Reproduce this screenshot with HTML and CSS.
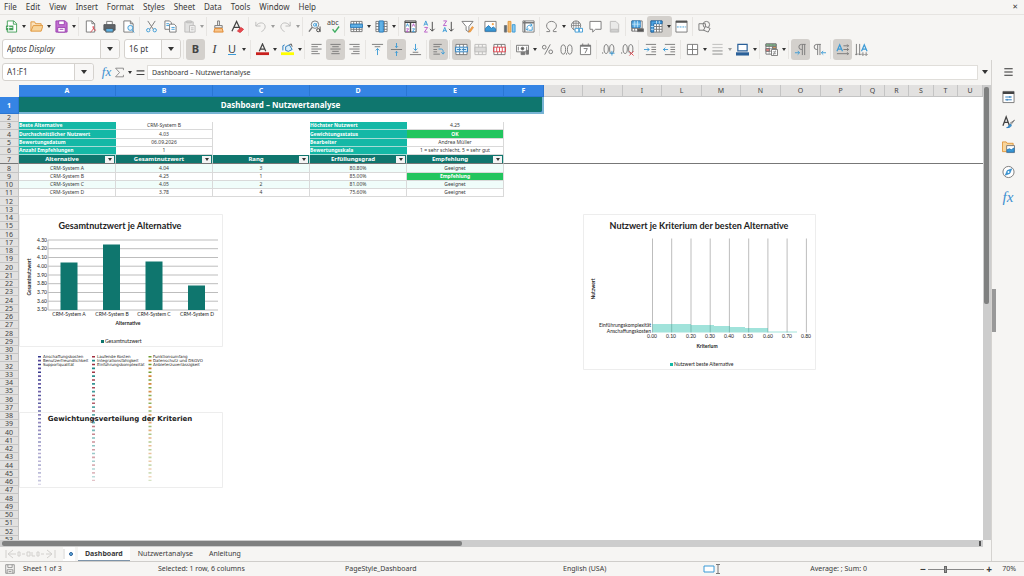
FILE: index.html
```html
<!DOCTYPE html>
<html lang="de">
<head>
<meta charset="utf-8">
<title>Dashboard – Nutzwertanalyse</title>
<link rel="stylesheet" href="styles.css">
</head>
<body>
<nav class="menubar">
  <button>File</button><button>Edit</button><button>View</button><button>Insert</button><button>Format</button><button>Styles</button><button>Sheet</button><button>Data</button><button>Tools</button><button>Window</button><button>Help</button>
  <button class="close" aria-label="Close">✕</button>
</nav>

<div class="toolbar">
  <button class="split" aria-label="New"><svg viewBox="0 0 14 14"><path d="M2.500 1h7l3 3v9h-10z" fill="#fff" stroke="#44a05a"/><path d="M1 6h8v5H1z" fill="#44a05a" stroke="none"/><path d="M2 8h6M4 6v5" stroke="#fff"/><path d="M9 1v3.500h3.500" stroke="#44a05a"/></svg></button>
  <button class="split" aria-label="Open"><svg viewBox="0 0 14 14"><path d="M1 12V2h4l1 2h6v3" fill="#fbe3bd" stroke="#e0963c"/><path d="M1 12l2.500-6H14l-2 6z" fill="#f8d59c" stroke="#e0963c"/></svg></button>
  <button class="split" aria-label="Save"><svg viewBox="0 0 14 14"><path d="M1 1h10l2 2v10H1z" fill="#c16fd0" stroke="#9c3fb0"/><path d="M4 1h6v4H4zM3 8h8v5H3z" fill="#fff" stroke="#9c3fb0"/><path d="M5 10h4" stroke="#9c3fb0"/></svg></button>
  <i class="sep"></i>
  <button aria-label="Export as PDF"><svg viewBox="0 0 14 14"><path d="M2.500 1h6l3 3v9h-9z" fill="#fff"/><path d="M8.500 1v3h3"/><path d="M7 13c3-2 4-5 3-6s0 4 3 4" stroke="#e0454f"/></svg></button>
  <button aria-label="Print"><svg viewBox="0 0 14 14"><path d="M4 5V1.500h6V5" fill="#fff"/><path d="M1 5h12v6H1z" fill="#606468" stroke="#505458"/><path d="M3 9h8v4H3z" fill="#5eb2e4" stroke="#505458"/></svg></button>
  <button aria-label="Print Preview"><svg viewBox="0 0 14 14"><path d="M2 1h7l3 3v9H2z" fill="#fff"/><path d="M9 1v3h3"/><circle cx="9" cy="8.500" r="2.700" fill="#e5f3fb" stroke="#3b9ad6"/><path d="M11 10.500l2 3" stroke="#3b9ad6"/></svg></button>
  <i class="sep"></i>
  <button aria-label="Cut"><svg viewBox="0 0 14 14"><path d="M3 1l6 9M11 1L5 10"/><circle cx="3.500" cy="11" r="1.800" stroke="#3b9ad6"/><circle cx="10.500" cy="11" r="1.800" stroke="#3b9ad6"/></svg></button>
  <button aria-label="Copy"><svg viewBox="0 0 14 14"><path d="M1 1h5l2 2v7H1z" fill="#fff"/><path d="M6 4.500h5l2 2V13H6z" fill="#fff"/><path d="M8 8h3.500M8 10h3.500" stroke="#3b9ad6"/><path d="M2.500 4h3M2.500 6h3" stroke="#3b9ad6"/></svg></button>
  <button class="split off" aria-label="Paste"><svg viewBox="0 0 14 14"><path d="M2 2h9v11H2z" fill="#ccc"/><path d="M4 1h5v2H4z"/><path d="M7 6h6v7H7z" fill="#f4f4f4"/><path d="M8.500 8.500h3M8.500 10.500h3"/></svg></button>
  <i class="sep"></i>
  <button aria-label="Clone Formatting"><svg viewBox="0 0 14 14"><path d="M6 1h2v5H6z"/><path d="M3 6h8v2.500H3z" fill="#f6f5f4"/><path d="M3 9h8l1 4H2z" fill="#f8c48a" stroke="#e0862c"/></svg></button>
  <button aria-label="Clear Formatting"><svg viewBox="0 0 14 14"><path d="M1 12L6 1.500 10 10M3 8h5.500" stroke="#444" stroke-width="1.300"/><path d="M7 12l3.500-4 3 2-3.500 3.500z" fill="#e8484e" stroke="#d63a42"/></svg></button>
  <i class="sep"></i>
  <button class="split off" aria-label="Undo"><svg viewBox="0 0 14 14"><path d="M2 2v4.500h5M2 6.500C5 2 11 2 12 6.500c.5 3-2 5-4 6"/></svg></button>
  <button class="split off" aria-label="Redo"><svg viewBox="0 0 14 14"><path d="M12 2v4.500H7M12 6.500C9 2 3 2 2 6.500c-.5 3 2 5 4 6"/></svg></button>
  <i class="sep"></i>
  <button aria-label="Find and Replace"><svg viewBox="0 0 14 14"><circle cx="7.500" cy="5" r="4" fill="#f3f9fd"/><path d="M4.500 8L1 12.500" stroke-width="1.500"/><circle cx="7.300" cy="5.200" r="1.400" stroke="#3b9ad6"/><path d="M9 3.500V7" stroke="#3b9ad6"/><circle cx="11" cy="11" r="1.700" stroke="#444"/><path d="M13 7v6" stroke="#444"/></svg></button>
  <button aria-label="Spelling" class="spell"><span>abc</span><svg viewBox="0 0 14 14"><path d="M6 10l2.500 3L13 7" stroke="#3fae62" stroke-width="1.500"/></svg></button>
  <i class="sep"></i>
  <button class="split" aria-label="Row"><svg viewBox="0 0 14 14"><path d="M1 1.500h12v11H1z" fill="#fff"/><path d="M1 4.500h12M1 10h12M4 1.500v11M7 1.500v11M10 1.500v11"/><path d="M.5 4.500h13V8H.5z" fill="#5fb1e6" stroke="#2c7cbc"/></svg></button>
  <button class="split" aria-label="Column"><svg viewBox="0 0 14 14"><path d="M1 1.500h12v11H1z" fill="#fff"/><path d="M1 4h12M1 7h12M1 10h12M4 1.500v11M10 1.500v11"/><path d="M4.500 1H9v12H4.500z" fill="#5fb1e6" stroke="#2c7cbc"/></svg></button>
  <i class="sep"></i>
  <button aria-label="Sort"><svg viewBox="0 0 14 14"><path d="M1 1h12v12H1z" fill="#fff" stroke="#444"/><path d="M1 2.500h12M7 2v11" stroke="#444" stroke-width="1.500"/><path d="M2.500 7l1.200-3L5 7M9 9.500h2.500L9 12.500h2.500" stroke="#3b9ad6"/><path d="M2.500 9.500H5l-2.500 3H5M9 7l1.200-3 1.300 3" stroke="#b85ac8"/></svg></button>
  <button aria-label="Sort Ascending"><svg viewBox="0 0 14 14"><path d="M1 6l2-5 2 5M2 4.500h2.500" stroke="#3b9ad6"/><path d="M1.500 8H5l-3.500 5H5" stroke="#b85ac8"/><path d="M10 2v10M7.500 9.500L10 12l2.500-2.500" stroke="#444"/></svg></button>
  <button aria-label="Sort Descending"><svg viewBox="0 0 14 14"><path d="M1.500 1H5L1.500 6H5" stroke="#b85ac8"/><path d="M1 13l2-5 2 5M2 11.500h2.500" stroke="#3b9ad6"/><path d="M10 2v10M7.500 9.500L10 12l2.500-2.500" stroke="#444"/></svg></button>
  <button aria-label="AutoFilter"><svg viewBox="0 0 14 14"><path d="M1 1.500h12L8.500 7v6L5.500 11V7z" fill="#fff"/><path d="M8 13l4-6 1.500 1L10 13z" fill="#f3a34c" stroke="#e0862c" stroke-width=".6"/></svg></button>
  <i class="sep"></i>
  <button aria-label="Insert Image"><svg viewBox="0 0 14 14"><path d="M1 1.500h12v11H1z" fill="#fff"/><path d="M1.500 12V9L5 6l3 3 2-1.500 2.500 2V12z" fill="#3b9ad6" stroke="#2c7cbc"/><circle cx="9.500" cy="4.500" r="1.200" fill="#f3a34c" stroke="none"/></svg></button>
  <button aria-label="Insert Chart"><svg viewBox="0 0 14 14"><path d="M1.500 6H4v7H1.500z" fill="#5b6b78"/><path d="M5.500 1.500h3V13h-3z" fill="#f6bd6e" stroke="#e0963c"/><path d="M10 5h3v8h-3z" fill="#8ccbf0" stroke="#3b9ad6"/></svg></button>
  <button aria-label="Pivot Table"><svg viewBox="0 0 14 14"><path d="M1 1h12v12H1z" fill="#fff"/><path d="M1 3h12M3 1v12" stroke-width="1.500"/><path d="M5.500 11V8c0-2 2-2.500 5-2.500M9 4l2 1.500L9 7M4 9.500L5.500 11 7 9.500M11 7v4H7" stroke="#3b9ad6"/></svg></button>
  <i class="sep"></i>
  <button class="split" aria-label="Special Character"><svg viewBox="0 0 14 14"><path d="M1.500 12.500H5V11C-.5 8 1.500 1.500 7 1.500S14.500 8 9 11v1.500h3.500"/></svg></button>
  <button aria-label="Hyperlink"><svg viewBox="0 0 14 14"><circle cx="6.500" cy="6" r="5" fill="#fff"/><path d="M1.500 6h10M6.500 1v10M2.500 3.500h8M4 1.500v9M9 1.500v9" stroke-width=".8"/><path d="M5.500 9h4v4h-4zM10 9h3.500v4H10z" fill="#fff" stroke="#3b9ad6"/></svg></button>
  <button aria-label="Comment"><svg viewBox="0 0 14 14"><path d="M1 1.500h12V10H7l-3 3v-3H1z" fill="#fff"/></svg></button>
  <button class="off" aria-label="Headers and Footers"><svg viewBox="0 0 14 14"><path d="M2.500 1.500h6l3 3V13h-9z" fill="#ddd"/><path d="M3 10h8v2H3z" fill="#bbb"/></svg></button>
  <i class="sep"></i>
  <button aria-label="Print Area"><svg viewBox="0 0 14 14"><path d="M1 1h11v11H1z" fill="#fff"/><path d="M1 9h11M4 8v4M7 8v4M9 1v11M1 1v11"/><path d="M1 1h9v7H1z" fill="#5fb1e6" stroke="#2c7cbc"/><path d="M1 4.500h9M4 1v7M7 1v7" stroke="#d8eefb" stroke-width=".7"/><path d="M7 9.500h6.500v3H7z" fill="#555"/></svg></button>
  <button class="split on" aria-label="Freeze Rows and Columns"><svg viewBox="0 0 14 14"><path d="M1 1h12v12H1z" fill="#fff"/><path d="M4 7h9M4 10h9M7 4v9M10 4v9"/><path d="M1 1h12v3H4v9H1z" fill="#4ba0de" stroke="#1c66a6"/><path d="M7 1v3M10 1v3M1 7h3M1 10h3" stroke="#bfe0f6"/></svg></button>
  <button aria-label="Split Window"><svg viewBox="0 0 14 14"><path d="M1 1h12v12H1z" fill="#fff"/><path d="M1 2h12" stroke-width="2" stroke="#555"/><path d="M2 7.500h10" stroke="#3b9ad6" stroke-dasharray="2 1"/></svg></button>
  <i class="sep"></i>
  <button aria-label="Shapes"><svg viewBox="0 0 14 14"><path d="M1 4h7v7H1z"/><circle cx="9" cy="5" r="3.500"/><path d="M8 7l5 2-2 4-5-2z" fill="#f6f5f4"/></svg></button>
</div>

<div class="toolbar format">
  <div class="combo font"><input class="italic" aria-label="Font Name" value="Aptos Display"><button aria-label="Font list"></button></div>
  <div class="combo size"><input aria-label="Font Size" value="16 pt"><button aria-label="Size list"></button></div>
  <i class="sep"></i>
  <button class="on glyph bold" aria-label="Bold">B</button>
  <button class="glyph slant" aria-label="Italic">I</button>
  <button class="split glyph under" aria-label="Underline">U</button>
  <i class="sep"></i>
  <button class="split" aria-label="Font Color"><svg viewBox="0 0 14 14"><path d="M3.500 9L7 1l3.500 8M4.500 6.500h5" stroke="#444" stroke-width="1.300"/><path d="M0 10h14v3H0z" fill="#c9211e" stroke="none"/></svg></button>
  <button class="split" aria-label="Highlighting"><svg viewBox="0 0 14 14"><path d="M2 8V3l2-1M5 4l4-2 3 5-4 2-3-1z" fill="#d9eefa" stroke="#2c7cbc"/><path d="M9 2l2-1 1 3" stroke="#555"/><path d="M0 10h14v3H0z" fill="#ffff00" stroke="none"/></svg></button>
  <i class="sep"></i>
  <button aria-label="Align Left"><svg viewBox="0 0 14 14"><path d="M1.500 1.500h11M1.500 4h7M1.500 6.500h11M1.500 9h7M1.500 11.500h9"/></svg></button>
  <button class="on" aria-label="Center"><svg viewBox="0 0 14 14"><path d="M1.500 1.500h11M3.500 4h7M1.500 6.500h11M3.500 9h7M2.500 11.500h9"/></svg></button>
  <button aria-label="Align Right"><svg viewBox="0 0 14 14"><path d="M1.500 1.500h11M5.500 4h7M1.500 6.500h11M5.500 9h7M3.500 11.500h9"/></svg></button>
  <i class="sep"></i>
  <button aria-label="Align Top"><svg viewBox="0 0 14 14"><path d="M1 1.500h12M4 4h6"/><path d="M7 13V6M5 8l2-2 2 2" stroke="#3b9ad6"/></svg></button>
  <button class="on" aria-label="Center Vertically"><svg viewBox="0 0 14 14"><path d="M1 7h12"/><path d="M7 0v5M5.500 3.500L7 5l1.500-1.500M7 14V9M5.500 10.500L7 9l1.500 1.500" stroke="#3b9ad6"/></svg></button>
  <button aria-label="Align Bottom"><svg viewBox="0 0 14 14"><path d="M1 12.500h12M4 10h6"/><path d="M7 1v7M5 6l2 2 2-2" stroke="#3b9ad6"/></svg></button>
  <i class="sep"></i>
  <button class="on" aria-label="Wrap Text"><svg viewBox="0 0 14 14"><path d="M1.500 1.500h9M1.500 4h7M1.500 7h4M1.500 9.500h4M1.500 12h7"/><path d="M7 6.500h3c2 0 2 1.500 2 5M10 10l2 2 1.500-2" stroke="#3b9ad6"/></svg></button>
  <i class="sep"></i>
  <button class="on" aria-label="Merge and Center"><svg viewBox="0 0 14 14"><path d="M1 1.500h12v11H1z" fill="#fff"/><path d="M5 1.500v11M9 1.500v11"/><path d="M.5 4.500h13v5H.5z" fill="#d9eefa" stroke="#2c7cbc"/><path d="M2 7h4M12 7H8M4.500 5.500L6 7 4.500 8.500M9.500 5.500L8 7l1.500 1.500" stroke="#2c7cbc"/></svg></button>
  <button class="off" aria-label="Merge Cells"><svg viewBox="0 0 14 14"><path d="M1 1.500h12v11H1zM5 1.500v11M9 1.500v11"/><path d="M1 4.500h12v5H1z" fill="#bbb"/></svg></button>
  <button aria-label="Unmerge Cells"><svg viewBox="0 0 14 14"><path d="M1 1.500h12v11H1z" fill="#fff"/><path d="M5 1.500v3M9 1.500v3M5 9.500v3M9 9.500v3"/><path d="M.5 4.500h13v5H.5zM4 4.500v5M7 4.500v5M10 4.500v5" stroke="#e0454f"/></svg></button>
  <i class="sep"></i>
  <button class="split" aria-label="Currency"><svg viewBox="0 0 14 14"><path d="M.5 2.500h13v7H.5z" fill="#fff"/><circle cx="7" cy="6" r="1.500" fill="#555"/><path d="M2.500 4v4M11.500 4v4"/><path d="M5.500 10h4v2.500h-4zM11 8h2.500v4H11z" fill="#777"/></svg></button>
  <button aria-label="Percent"><svg viewBox="0 0 14 14"><circle cx="3.500" cy="4.500" r="2"/><circle cx="10.500" cy="9.500" r="2"/><path d="M10 1.500l-6 11"/></svg></button>
  <button aria-label="Number"><svg viewBox="0 0 14 14"><ellipse cx="3.500" cy="7" rx="2.500" ry="5"/><ellipse cx="10.500" cy="7" rx="2.500" ry="5"/><path d="M7 11v1.500"/></svg></button>
  <button aria-label="Date"><svg viewBox="0 0 14 14"><path d="M1.500 2.500h11v10h-11z" fill="#fff"/><path d="M1.500 3h11" stroke-width="2"/><path d="M4 .5v2M10 .5v2M5 6h4l-2.500 5"/></svg></button>
  <i class="sep"></i>
  <button aria-label="Add Decimal Place"><svg viewBox="0 0 14 14"><path d="M.7 10v1.500"/><ellipse cx="4.500" cy="6.500" rx="2.300" ry="4.800"/><ellipse cx="10.500" cy="6.500" rx="2.300" ry="4.800"/><path d="M8 11h5.500M10.700 8.500v5" stroke="#3b9ad6"/></svg></button>
  <button aria-label="Delete Decimal Place"><svg viewBox="0 0 14 14"><path d="M.7 10v1.500"/><ellipse cx="4.500" cy="6.500" rx="2.300" ry="4.800"/><ellipse cx="10.500" cy="6.500" rx="2.300" ry="4.800"/><path d="M9 9l4.500 4.500M13.500 9L9 13.500" stroke="#e0454f"/></svg></button>
  <i class="sep"></i>
  <button aria-label="Increase Indent"><svg viewBox="0 0 14 14"><path d="M2 1.500h11M8 4.500h5M8 7h5M8 9.500h5M2 12.500h11"/><path d="M0 7h5.500M3.500 5l2 2-2 2" stroke="#3b9ad6"/></svg></button>
  <button aria-label="Decrease Indent"><svg viewBox="0 0 14 14"><path d="M2 1.500h11M8 4.500h5M8 7h5M8 9.500h5M2 12.500h11"/><path d="M5.500 7H0M2.500 5l-2 2 2 2" stroke="#3b9ad6"/></svg></button>
  <i class="sep"></i>
  <button class="split" aria-label="Borders"><svg viewBox="0 0 14 14"><path d="M1.500 1.500h11v11h-11zM7 1.500v11M1.500 7h11" fill="#fff"/></svg></button>
  <button class="split off" aria-label="Border Style"><svg viewBox="0 0 14 14"><path d="M1.500 1.500h11M1.500 5h11"/><path d="M1.500 8.500h11M1.500 12h11" stroke-width="1.800"/></svg></button>
  <button class="split" aria-label="Border Color"><svg viewBox="0 0 14 14"><path d="M2 1.500h10v7H2z" fill="#fff" stroke="#2a6099" stroke-width="1.300"/><path d="M0 10h14v3.500H0z" fill="#2a6099" stroke="none"/></svg></button>
  <i class="sep"></i>
  <button class="split" aria-label="Conditional Formatting"><svg viewBox="0 0 14 14"><path d="M1 1h11v11H1z" fill="#fff"/><path d="M1 1h11v2.500H1z" fill="#7cc38a"/><path d="M1 6h4v3H1z" fill="#f08080"/><path d="M8 4h4v2H8z" fill="#f3a34c"/><path d="M4.500 1v11M8.500 1v11M1 3.500h11M1 6h11M1 9h11" stroke-width=".6"/><path d="M7 7h6.500v6.500H7z" fill="#fff"/><path d="M8.500 9.500h3.500M8.500 11.500h3.500M11.500 8l-2.500 5" stroke-width=".7"/></svg></button>
  <i class="sep"></i>
  <button class="on" aria-label="Left-To-Right"><svg viewBox="0 0 14 14"><path d="M12.500 1.500H8a2.600 2.600 0 000 5.500h1V2M9 7v6M11.500 1.500V13"/><path d="M1 10.500h5M4 8.500l2 2-2 2" stroke="#3b9ad6"/></svg></button>
  <button aria-label="Right-To-Left"><svg viewBox="0 0 14 14"><path d="M8.500 1.500H4A2.600 2.600 0 004 7h1V2M5 7v6M7.500 1.500V13"/><path d="M14 10.500H9M11 8.500l-2 2 2 2" stroke="#3b9ad6"/></svg></button>
  <i class="sep"></i>
  <button class="on" aria-label="Text Left To Right"><svg viewBox="0 0 14 14"><path d="M1 9l3-7 3 7M2 6.500h4" stroke="#3b9ad6" stroke-width="1.300"/><path d="M8 3h5.500M8 7h5.500M1 11.500h12.500M12 1.500L13.500 3 12 4.500M12 5.500L13.500 7 12 8.500M12 10l1.500 1.500L12 13"/></svg></button>
  <button aria-label="Text Top To Bottom"><svg viewBox="0 0 14 14"><path d="M7 9l3-7 3 7M8 6.500h4" stroke="#3b9ad6" stroke-width="1.300"/><path d="M1.500 1v12M5 1v12M0 11.500L1.500 13 3 11.500M3.500 11.500L5 13l1.500-1.500M8.500 10v3M12 10v3M7 12l1.500 1.500L10 12M10.500 12l1.500 1.500 1.500-1.500"/></svg></button>
</div>

<main class="work">
  <section class="doc">
    <div class="formula">
      <div class="combo name"><input aria-label="Name Box" value="A1:F1"><button aria-label="Names"></button></div>
      <button class="fx" aria-label="Function Wizard">fx</button>
      <button class="tool sigma" aria-label="Select Function"><svg viewBox="0 0 14 14"><path d="M12 4V1.500H2L7 7l-5 5.500h10V10"/></svg></button>
      <button class="tool" aria-label="Formula"><svg viewBox="0 0 14 14"><path d="M2 5h10M2 9.500h10" stroke="#444" stroke-width="1.500"/></svg></button>
      <input class="line" aria-label="Input line" value="Dashboard – Nutzwertanalyse">
      <button class="expand" aria-label="Expand Formula Bar"></button>
    </div>
    <div class="view">
      <div class="sheet">
        <table>
          <colgroup><col class="c-num"><col class="c-w"><col class="c-w"><col class="c-w"><col class="c-w"><col class="c-w"><col class="c-m"><col class="c-n"><col class="c-m"><col class="c-n"><col class="c-m"><col class="c-n"><col class="c-m"><col class="c-m"><col class="c-m"><col class="c-s"><col class="c-s"><col class="c-t"><col class="c-s"><col></colgroup>
          <thead><tr><th></th><th class="sel">A</th><th class="sel">B</th><th class="sel">C</th><th class="sel">D</th><th class="sel">E</th><th class="sel">F</th><th>G</th><th>H</th><th>I</th><th>L</th><th>M</th><th>N</th><th>O</th><th>P</th><th>Q</th><th>R</th><th>S</th><th>T</th><th>U</th></tr></thead>
          <tbody>
            <tr class="first"><th class="sel">1</th><td colspan="6" class="title">Dashboard – Nutzwertanalyse<i class="handle"></i></td><td colspan="13"></td></tr>
            <tr><th>2</th><td colspan="19"></td></tr>
            <tr><th>3</th><td class="key">Beste Alternative</td><td class="val">CRM-System B</td><td></td><td class="key">Höchster Nutzwert</td><td class="val">4.25</td><td colspan="14"></td></tr>
            <tr><th>4</th><td class="key">Durchschnittlicher Nutzwert</td><td class="val">4.03</td><td></td><td class="key">Gewichtungsstatus</td><td class="val good">OK</td><td colspan="14"></td></tr>
            <tr><th>5</th><td class="key">Bewertungsdatum</td><td class="val">06.09.2026</td><td></td><td class="key">Bearbeiter</td><td class="val">Andrea Müller</td><td colspan="14"></td></tr>
            <tr><th>6</th><td class="key">Anzahl Empfehlungen</td><td class="val">1</td><td></td><td class="key">Bewertungsskala</td><td class="val">1 = sehr schlecht, 5 = sehr gut</td><td colspan="14"></td></tr>
            <tr class="heads"><th>7</th><td><div><span>Alternative</span><button aria-label="Filter Alternative"></button></div></td><td><div><span>Gesamtnutzwert</span><button aria-label="Filter Gesamtnutzwert"></button></div></td><td><div><span>Rang</span><button aria-label="Filter Rang"></button></div></td><td><div><span>Erfüllungsgrad</span><button aria-label="Filter Erfüllungsgrad"></button></div></td><td><div><span>Empfehlung</span><button aria-label="Filter Empfehlung"></button></div></td><td colspan="14" class="rest"></td></tr>
            <tr class="tint"><th>8</th><td class="val">CRM-System A</td><td class="val">4.04</td><td class="val">3</td><td class="val">80.80%</td><td class="val">Geeignet</td><td colspan="14"></td></tr>
            <tr><th>9</th><td class="val">CRM-System B</td><td class="val">4.25</td><td class="val">1</td><td class="val">85.00%</td><td class="val good">Empfehlung</td><td colspan="14"></td></tr>
            <tr class="tint"><th>10</th><td class="val">CRM-System C</td><td class="val">4.05</td><td class="val">2</td><td class="val">81.00%</td><td class="val">Geeignet</td><td colspan="14"></td></tr>
            <tr><th>11</th><td class="val">CRM-System D</td><td class="val">3.78</td><td class="val">4</td><td class="val">75.60%</td><td class="val">Geeignet</td><td colspan="14"></td></tr>
            <tr><th>12</th></tr><tr><th>13</th></tr><tr><th>14</th></tr><tr><th>15</th></tr><tr><th>16</th></tr><tr><th>17</th></tr><tr><th>18</th></tr><tr><th>19</th></tr><tr><th>20</th></tr><tr><th>21</th></tr><tr><th>22</th></tr><tr><th>23</th></tr><tr><th>24</th></tr><tr><th>25</th></tr><tr><th>26</th></tr><tr><th>27</th></tr><tr><th>28</th></tr><tr><th>29</th></tr><tr><th>30</th></tr><tr><th>31</th></tr><tr><th>32</th></tr><tr><th>33</th></tr><tr><th>34</th></tr><tr><th>35</th></tr><tr><th>36</th></tr><tr><th>37</th></tr><tr><th>38</th></tr><tr><th>39</th></tr><tr><th>40</th></tr><tr><th>41</th></tr><tr><th>42</th></tr><tr><th>43</th></tr><tr><th>44</th></tr><tr><th>45</th></tr><tr><th>46</th></tr><tr><th>47</th></tr><tr><th>48</th></tr><tr><th>49</th></tr><tr><th>50</th></tr><tr><th>51</th></tr><tr><th>52</th></tr><tr><th>53</th></tr>
          </tbody>
        </table>

        <svg class="chart totals" viewBox="19 214 204 133" width="204" height="133">
          <path class="frame" d="M19.500 214.500h203v132h-203z"/>
          <text class="ctitle" x="120" y="229">Gesamtnutzwert je Alternative</text>
          <path class="lines" d="M48 240h170M48 248.700h170M48 257.500h170M48 266.200h170M48 275h170M48 283.700h170M48 292.500h170M48 301.200h170M48 310h170M48 240v70"/>
          <path class="bar" d="M60.500 262.500h17V310h-17zM103 244.500h17V310h-17zM145.500 261.500h17V310h-17zM188 285.500h17V310h-17z"/>
          <g class="end"><text x="47" y="242">4.30</text><text x="47" y="250">4.20</text><text x="47" y="259">4.10</text><text x="47" y="268">4.00</text><text x="47" y="277">3.90</text><text x="47" y="285">3.80</text><text x="47" y="294">3.70</text><text x="47" y="303">3.60</text><text x="47" y="311">3.50</text></g>
          <g class="mid"><text x="69" y="316">CRM-System A</text><text x="112" y="316">CRM-System B</text><text x="154" y="316">CRM-System C</text><text x="197" y="316">CRM-System D</text></g>
          <g class="mid strong"><text x="128" y="325">Alternative</text><text transform="translate(31 277) rotate(-90)">Gesamtnutzwert</text></g>
          <path class="bar" d="M101 340h3v3h-3z"/><text x="105" y="343">Gesamtnutzwert</text>
        </svg>

        <svg class="chart weights" viewBox="19 352 204 136" width="204" height="136">
          <defs><linearGradient id="fade" x1="0" y1="0" x2="0" y2="1"><stop offset="0.100" stop-color="#fff" stop-opacity="0"/><stop offset="1" stop-color="#fff" stop-opacity="0.750"/></linearGradient></defs>
          <path class="frame" d="M19.500 412.500h203v75h-203z"/>
          <g class="dots">
            <path stroke="#31348a" d="M39.500 356v129"/><path stroke="#5a4a9c" d="M39.500 359.870v125"/>
            <path stroke="#a03040" d="M93.500 356v125"/><path stroke="#1f8a8a" d="M93.500 359.870v121"/>
            <path stroke="#6f9a2c" d="M150 356v125"/><path stroke="#d07a28" d="M150 359.870v121"/>
          </g>
          <path d="M37 355h116v131H37z" fill="url(#fade)"/>
          <g class="tiny"><text x="43" y="358">Anschaffungskosten</text><text x="43" y="362">Benutzerfreundlichkeit</text><text x="43" y="366">Supportqualität</text><text x="97" y="358">Laufende Kosten</text><text x="97" y="362">Integrationsfähigkeit</text><text x="97" y="366">Einführungskomplexität</text><text x="153" y="358">Funktionsumfang</text><text x="153" y="362">Datenschutz und DSGVO</text><text x="153" y="366">Anbieterzuverlässigkeit</text></g>
          <text class="wide" x="120" y="421">Gewichtungsverteilung der Kriterien</text>
        </svg>

        <svg class="chart best" viewBox="583 214 233 156" width="233" height="156">
          <path class="frame" d="M583.500 214.500h232v155h-232z"/>
          <text class="ctitle" x="699" y="229">Nutzwert je Kriterium der besten Alternative</text>
          <path class="lines" d="M652.500 238.500v94M671.700 238.500v94M691 238.500v94M710.200 238.500v94M729.400 238.500v94M748.700 238.500v94M767.900 238.500v94M787.100 238.500v94M806.400 238.500v94"/>
          <path d="M652.500 324H691v1h23v1h16v1h15v1h23v3.500h29v1H652.500z" fill="#14b8a6" opacity=".4"/>
          <g class="end"><text x="651" y="327">Einführungskomplexität</text><text x="651" y="333">Anschaffungskosten</text></g>
          <g class="mid"><text x="652" y="338">0.00</text><text x="671" y="338">0.10</text><text x="691" y="338">0.20</text><text x="710" y="338">0.30</text><text x="729" y="338">0.40</text><text x="748" y="338">0.50</text><text x="768" y="338">0.60</text><text x="787" y="338">0.70</text><text x="806" y="338">0.80</text></g>
          <g class="mid strong"><text x="707" y="348">Kriterium</text><text transform="translate(595 289) rotate(-90)">Nutzwert</text></g>
          <path d="M670 363h3v3h-3z" fill="#14b8a6"/><text x="674" y="366">Nutzwert beste Alternative</text>
        </svg>
      </div>
      <div class="vscroll"><i></i></div>
      <div class="hscroll"><i></i><b></b></div>
    </div>
    <div class="tabs">
      <svg class="nav" viewBox="0 0 52 10"><path d="M1 1v8M8 1L3 5l5 4M3 5h8M13 3v4h2V3zM17 5h3M22 3h3v4h-3zM27 3v4h3M32 3h2v4h-2zM36 5h3M42 1l5 4-5 4M47 5h-6M50 1v8"/></svg>
      <button class="add" aria-label="Add Sheet"><svg viewBox="0 0 10 10"><circle cx="7" cy="5" r="1.500" fill="#6cb4e4" stroke="#2a6099"/><path d="M0 0v10" stroke="#d5d3d0"/></svg></button>
      <button class="active">Dashboard</button><button>Nutzwertanalyse</button><button>Anleitung</button>
    </div>
  </section>
  <aside class="sidebar">
    <button aria-label="Sidebar Settings"><svg viewBox="0 0 14 14"><path d="M2.500 3.500h9M2.500 7h9M2.500 10.500h9" stroke="#333" stroke-width="1.300"/></svg></button>
    <button aria-label="Properties"><svg viewBox="0 0 14 14"><path d="M1 1h12v12H1z" fill="#fff"/><path d="M1 2.500h12" stroke-width="2.500" stroke="#444"/><path d="M3.500 7h7M3.500 10h7M8.500 6v2M5.500 9v2" stroke="#2c7cbc"/></svg></button>
    <button aria-label="Styles"><svg viewBox="0 0 14 14"><path d="M1 11L4.500 1.500 8 11M2.500 7.500h4" stroke="#444" stroke-width="1.400"/><path d="M13.500 5L9.500 10M13.500 5l-5 3.500" /><path d="M5 13c3 0 2-3 4-3.500 2 .5 1 4-4 3.500z" fill="#3b9ad6" stroke="#2c7cbc"/></svg></button>
    <button aria-label="Gallery"><svg viewBox="0 0 14 14"><path d="M.5 12V1.500h4l1 1.500H12v9z" fill="#f8d59c" stroke="#e0963c"/><path d="M5 5.500h8.500v7.500H5z" fill="#fff"/><path d="M5.500 12.500V10L8 9l2 1 3-2v4.500z" fill="#3b9ad6" stroke="#2c7cbc"/></svg></button>
    <button aria-label="Navigator"><svg viewBox="0 0 14 14"><circle cx="7" cy="7" r="6" fill="#fff"/><path d="M10.500 3.500L8.500 8.500l-5 2 2-5z" fill="#3b9ad6" stroke="#2c7cbc" stroke-width=".6"/><circle cx="7" cy="7" r="1" fill="#fff" stroke="none"/></svg></button>
    <button class="fx" aria-label="Functions">fx</button>
    <i class="grip"></i>
  </aside>
</main>

<footer class="status">
  <svg viewBox="0 0 14 14"><path d="M1 1h12v12H1zM4 1v4h6V1M3 13V8h8v5M5 10.500h4"/></svg>
  <span class="s-sheet">Sheet 1 of 3</span>
  <span class="s-sel">Selected: 1 row, 6 columns</span>
  <span class="s-style">PageStyle_Dashboard</span>
  <span class="s-lang">English (USA)</span>
  <svg class="mode" viewBox="0 0 18 12"><path d="M1 3h10v6H1z" stroke="#3b9ad6" fill="#fff"/><path d="M13 1.500h4M13 10.500h4M15 1.500v9"/></svg>
  <span class="s-sum">Average: ; Sum: 0</span>
  <button aria-label="Zoom out">−</button>
  <input type="range" min="0" max="100" value="30" aria-label="Zoom">
  <button aria-label="Zoom in">+</button>
  <span class="s-zoom">70%</span>
</footer>
</body>
</html>
```
FILE: styles.css
```css
* { box-sizing: border-box; }

body {
  margin: 0;
  height: 100vh;
  overflow: hidden;
  display: flex;
  flex-direction: column;
  background: #f6f5f3;
  color: #3a3a3a;
  font: 7px/10px "Noto Sans", "Open Sans", sans-serif;
}

button, input { font: inherit; color: inherit; margin: 0; padding: 0; border: 0; background: none; min-width: 0; }
svg { fill: none; stroke: #787878; stroke-width: 1; display: block; }

/* menu */
.menubar { display: flex; gap: 9px; height: 15px; padding: 0 6px 0 4px; align-items: center; border-bottom: 1px solid #e6e4e1; flex: none; }
.menubar button { font-size: 8px; }
.menubar .close { margin-left: auto; font-family: "DejaVu Sans", sans-serif; font-weight: bold; font-size: 7px; }

/* toolbars */
.toolbar { display: flex; align-items: center; height: 23px; padding-left: 2px; flex: none; }
.toolbar.format { height: 22px; }
.toolbar > button { position: relative; width: 19px; height: 21px; display: flex; align-items: center; justify-content: center; border-radius: 3px; flex: none; }
.toolbar > button svg { width: 13px; height: 13px; flex: none; }
.toolbar > .split { width: 25px; justify-content: flex-start; padding-left: 3px; gap: 4px; }
.split::after, .sigma::after { content: ""; border: 2px solid transparent; border-top: 3px solid #333; border-bottom: 0; flex: none; }
.on { background: #d3d0cc; }
.off { opacity: .45; }
.sep { width: 1px; height: 19px; margin: 0 2px 0 1px; background: #e7e5e2; flex: none; }
.toolbar .glyph { font-size: 11px; line-height: 14px; color: #444; }
.toolbar .bold { font-weight: bold; }
.toolbar .slant { font-family: "Liberation Serif", serif; font-style: italic; font-size: 13px; }
.toolbar .under { text-decoration: underline; text-decoration-color: #3b9ad6; padding-left: 4px; gap: 6px; }
.toolbar .spell span { position: absolute; top: 2px; left: 3px; font-size: 7px; color: #444; }

.combo { display: flex; height: 20px; background: #fff; border: 1px solid #d5d2ce; border-radius: 3px; flex: none; font-size: 8px; }
.combo input { flex: 1; padding-left: 4px; }
.combo button { width: 19px; border-left: 1px solid #d5d2ce; background: #f8f7f6; display: flex; align-items: center; justify-content: center; border-radius: 0 3px 3px 0; }
.combo button::after, .expand::after { content: ""; border: 3px solid transparent; border-top: 4px solid #333; border-bottom: 0; }
.combo.font { width: 118px; margin-right: 4px; }
.combo.size { width: 57px; margin-right: 1px; }
.combo.name { width: 92px; height: 18px; margin-right: 6px; }
.italic { font-style: italic; }

/* work area */
.work { flex: 1; display: flex; min-height: 0; }
.doc { flex: 1; display: flex; flex-direction: column; min-width: 0; }
.formula { display: flex; align-items: center; height: 25px; padding: 0 0 1px 2px; flex: none; }
.fx { width: 13px; font: italic 13px/14px "Liberation Serif", serif; color: #3b8fd0; }
.tool { display: flex; align-items: center; justify-content: center; width: 14px; height: 14px; }
.tool svg { width: 11px; height: 11px; }
.tool.sigma { width: 20px; gap: 3px; }
.formula .line { flex: 1; height: 15px; background: #fff; border: 1px solid #e0deda; padding-left: 4px; }
.expand { width: 13px; display: flex; justify-content: center; }

.view { flex: 1; display: grid; grid-template: minmax(0, 1fr) 7px / minmax(0, 1fr) 8px; min-height: 0; }
.sheet { position: relative; overflow: hidden; background: #fff; }
.vscroll, .hscroll { background: #cdcdcd; display: flex; }
.vscroll { padding: 2px 2px 0 1px; }
.vscroll i { width: 5px; height: 48%; background: #7f8080; border-radius: 2px; }
.hscroll { padding: 1px 2px 1px; justify-content: space-between; }
.hscroll i { width: 47%; background: #7f8080; border-radius: 2px; }
.hscroll b { width: 2px; background: #555; }

table { width: 100%; table-layout: fixed; border-collapse: separate; border-spacing: 0; font-size: 5px; line-height: 7px; }
.c-num { width: 19px; }
.c-w { width: 97px; }
.c-m { width: 40px; }
.c-n { width: 39px; }
.c-s { width: 24px; }
.c-t { width: 25px; }
th, td { padding: 0; overflow: hidden; white-space: nowrap; text-align: center; }
th { background: #e2e1e0; border-right: 1px solid #c4c4c4; border-bottom: 1px solid #c4c4c4; font-size: 7px; font-weight: normal; color: #444; }
thead th { height: 12px; line-height: 11px; }
thead th:first-child { background: #f6f5f3; border: 0; }
.sel, thead .sel { background: #3584e4; border-color: #2a76d2; color: #fff; font-weight: bold; }
tbody tr { height: 8px; }
tbody tr:nth-child(4n) { height: 9px; }
tbody .first { height: 17px; }
tbody .heads { height: 9px; }
.title { background: #0f766e; color: #fff; font-size: 8px; font-weight: bold; line-height: 14px; border: solid #78b4d4; border-width: 0 2px 2px 0; position: relative; }
.handle { position: absolute; right: -2px; bottom: -2px; width: 3px; height: 3px; background: #2a76d2; }
.key { background: #14b8a6; color: #fff; font-weight: bold; text-align: left; border-bottom: 1px solid #a5dcd6; }
.val { border-right: 1px solid #d9d9d9; border-bottom: 1px solid #d9d9d9; }
.tint .val { background: #f0fdfa; }
.val.good { background: #22c55e; color: #fff; font-weight: bold; }
.heads td { background: #0f766e; color: #fff; font-size: 6px; font-weight: bold; border-right: 1px solid #c4d8d6; border-bottom: 1px solid #777; }
.heads .rest { background: #fff; border-right: 0; }
.heads th { border-bottom-color: #777; }
.heads div { display: flex; align-items: center; height: 8px; }
.heads span { flex: 1; }
.heads button { width: 9px; height: 7px; background: #f4f4f4; display: flex; align-items: center; justify-content: center; margin-right: 1px; }
.heads button::after { content: ""; border: 2px solid transparent; border-top: 3px solid #333; border-bottom: 0; }

/* floating charts */
.chart { position: absolute; font: 5px Lato, sans-serif; }
.chart text { fill: #222; stroke: none; }
.totals { left: 19px; top: 129px; }
.weights { left: 19px; top: 267px; }
.best { left: 583px; top: 129px; }
.frame { stroke: #ededed; }
.lines { stroke: #bdbdbd; }
.bar { fill: #0f766e; stroke: none; }
.best path[fill], .weights path[fill] { stroke: none; }
.chart .ctitle { font-size: 9px; font-weight: bold; text-anchor: middle; }
.end { text-anchor: end; }
.mid { text-anchor: middle; }
.strong { font-weight: bold; }
.dots path { stroke-width: 3; stroke-dasharray: 1.6 6.14; }
.tiny { font: 4px "DejaVu Sans", sans-serif; }
.chart .wide { font: bold 7px "DejaVu Sans", sans-serif; text-anchor: middle; }

/* sheet tabs */
.tabs { display: flex; align-items: stretch; height: 14px; padding-left: 5px; flex: none; }
.nav { width: 52px; height: 10px; margin: 2px 6px 0 0; stroke: #d2d0cd; }
.tabs .add { width: 12px; padding: 0; margin-right: 3px; background: #fff; }
.tabs .add svg { width: 12px; height: 10px; }
.tabs button { padding: 0 8px; }
.tabs .active { background: #fff; font-weight: bold; border-bottom: 1px solid #7d93a8; padding: 0 7px; }

/* sidebar */
.sidebar { position: relative; width: 33px; border-left: 1px solid #d5d3d0; display: flex; flex-direction: column; align-items: center; padding-top: 5px; gap: 11px; }
.sidebar button { height: 14px; flex: none; }
.sidebar svg { width: 13px; height: 14px; }
.sidebar .fx { font-size: 15px; }
.grip { position: absolute; left: 0; top: 229px; width: 4px; height: 43px; background: #999; }

/* status bar */
.status { display: flex; align-items: center; height: 15px; border-top: 1px solid #cfcdca; padding: 0 8px 0 5px; flex: none; }
.status svg { width: 10px; height: 10px; margin-right: 8px; }
.s-sheet { width: 135px; }
.s-sel { width: 187px; }
.s-style { width: 218px; }
.s-lang { flex: 1; }
.status .mode { width: 18px; height: 12px; margin-right: 89px; }
.s-sum { width: 108px; }
.status button { width: 10px; font-size: 10px; font-weight: bold; }
.status input { appearance: none; width: 56px; height: 8px; background: linear-gradient(#888, #888) center / 100% 1px no-repeat; }
.status input::-webkit-slider-thumb { appearance: none; width: 3px; height: 7px; background: #999; border: 1px solid #666; }
.s-zoom { margin-left: 8px; }
```
